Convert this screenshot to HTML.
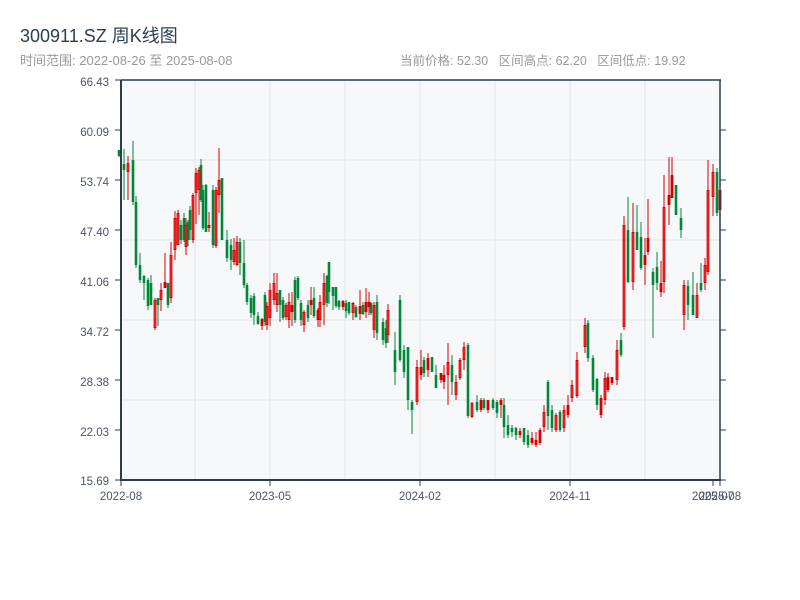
<!DOCTYPE html>
<html><head><meta charset="utf-8"><style>
body{margin:0;background:#fff;width:800px;height:600px;overflow:hidden;font-family:"Liberation Sans","Noto Sans CJK SC",sans-serif;}
.t{position:absolute;left:20px;top:22px;font-size:18px;color:#2c3e50;}
.s{position:absolute;top:50px;font-size:13px;color:#999;white-space:nowrap;}
svg{position:absolute;left:0;top:0}
</style></head><body>
<div class="t">300911.SZ 周K线图</div>
<div class="s" style="left:20px">时间范围: 2022-08-26 至 2025-08-08</div>
<div class="s" style="left:400px;font-size:12.5px">当前价格: 52.30&nbsp;&nbsp; 区间高点: 62.20&nbsp;&nbsp; 区间低点: 19.92</div>
<svg width="800" height="600" font-family="Liberation Sans, sans-serif" font-size="11.5" fill="#4a5568">
<rect x="121" y="80" width="599" height="400" fill="#f7f8fa"/>
<g stroke="#e2e5ea" stroke-width="1">
<line x1="121" y1="160" x2="720" y2="160"/><line x1="121" y1="240" x2="720" y2="240"/><line x1="121" y1="320" x2="720" y2="320"/><line x1="121" y1="400" x2="720" y2="400"/>
<line x1="195" y1="80" x2="195" y2="480"/><line x1="270" y1="80" x2="270" y2="480"/><line x1="345" y1="80" x2="345" y2="480"/><line x1="420" y1="80" x2="420" y2="480"/><line x1="495" y1="80" x2="495" y2="480"/><line x1="570" y1="80" x2="570" y2="480"/><line x1="645" y1="80" x2="645" y2="480"/>
</g>
<g fill="none">
<path stroke="#00883a" stroke-width="1" d="M119 150V157M124 149V200M133 141V205M136 196V268M140 253V283M144 275V300M148 278V310M151 275V305M158 298V326M168 283V308M181 220V244M184 213V242M188 220V246M190 206V240M201 159V202M203 185V230M206 184V232M213 185V248M222 178V240M227 230V262M231 239V270M240 238V275M244 240V288M247 283V305M251 295V318M254 293V325M258 312V325M265 292V326M280 290V322M283 297V320M295 277V323M298 276V300M301 300V326M308 300V322M314 287V318M327 275V307M329 262V304M333 287V310M336 287V308M339 300V310M346 300V318M349 302V315M356 305V318M363 302V315M371 302V315M377 295V340M383 318V345M386 320V348M395 332V385M400 295V362M404 345V378M408 347V410M412 400V434M424 357V377M432 357V372M436 365V388M452 355V395M468 343V418M477 395V412M484 398V410M493 398V410M497 400V418M504 398V438M508 415V438M512 425V437M516 427V440M524 428V445M528 430V448M548 380V430M552 405V432M560 410V432M588 320V362M593 355V392M597 378V410M621 333V357M628 197V283M637 205V250M641 222V270M653 268V338M657 252V290M676 185V215M681 208V238M688 280V320M693 272V310M701 263V292M717 168V216"/>
<path stroke="#00883a" stroke-width="2.6" d="M119 150V156M124 164V170M133 160V202M136 202V265M140 265V280M144 276V283M148 280V306M151 283V305M158 298V305M168 283V305M181 225V240M184 218V240M188 222V240M190 210V230M201 165V200M203 190V228M206 185V232M213 190V245M222 178V240M227 240V258M231 245V260M240 242V263M244 263V285M247 285V302M251 298V313M254 296V315M258 316V324M265 295V322M280 290V305M283 300V318M295 280V320M298 278V298M301 303V320M308 305V318M314 298V316M327 276V303M329 262V292M333 287V296M336 287V306M339 301V307M346 303V311M349 302V313M356 307V317M363 305V314M371 303V313M377 302V333M383 322V340M386 328V343M395 350V372M400 300V360M404 350V372M408 347V400M412 402V410M424 360V373M432 357V372M436 375V388M452 365V382M468 345V416M477 402V410M484 400V408M493 400V408M497 402V413M504 405V427M508 425V435M512 428V432M516 428V435M524 428V442M528 435V445M548 382V416M552 410V428M560 412V430M588 323V358M593 358V390M597 379V405M621 340V355M628 230V282M637 232V250M641 237V268M653 272V285M657 267V283M676 185V215M681 218V230M688 286V305M693 295V315M701 283V290M717 172V213"/>
<path stroke="#d40000" stroke-width="1" d="M128 156V200M155 298V330M161 283V311M165 253V285M171 242V303M175 211V260M178 210V245M186 218V255M193 193V243M196 168V224M199 167V215M209 212V232M216 187V248M219 148V213M234 238V265M237 236V266M262 318V330M267 302V330M270 283V326M274 273V305M277 273V312M286 303V320M289 293V328M292 292V326M304 310V332M311 287V315M318 308V327M320 295V327M324 273V325M343 300V310M353 302V320M360 290V320M366 288V318M369 292V315M374 302V338M388 304V343M417 360V405M421 350V380M428 353V377M441 373V383M444 365V389M448 343V405M456 375V400M460 358V380M464 342V370M472 402V418M481 398V412M488 400V413M501 398V418M520 428V438M532 432V445M536 432V447M540 428V445M544 405V432M556 413V432M564 405V432M568 395V418M572 380V402M577 352V398M585 318V353M601 395V418M605 372V405M608 373V392M612 377V385M617 340V385M624 216V330M633 203V290M645 238V285M648 199V255M661 261V297M664 175V293M669 157V225M672 157V190M684 280V330M697 283V318M705 258V290M708 160V275M713 164V216M720 185V215"/>
<path stroke="#d40000" stroke-width="2.8" d="M128 163V172M155 300V328M161 290V300M165 282V288M171 255V298M175 218V250M178 213V245M186 225V247M193 195V240M196 173V193M199 170V190M209 225V228M216 190V246M219 180V195M234 250V262M237 242V265M262 319V326M267 306V325M270 290V318M274 283V300M277 293V305M286 305V317M289 302V320M292 305V312M304 312V325M311 300V305M318 310V320M320 302V320M324 283V305M343 301V307M353 303V313M360 306V314M366 302V312M369 302V307M374 305V330M388 310V335M417 367V402M421 367V375M428 358V370M441 373V380M444 375V382M448 362V375M456 382V395M460 360V378M464 347V360M472 403V417M481 400V410M488 400V410M501 400V405M520 431V435M532 438V443M536 440V445M540 430V443M544 412V427M556 415V430M564 410V428M568 405V415M572 385V398M577 360V396M585 325V347M601 398V415M605 378V400M608 377V390M612 377V383M617 350V380M624 225V327M633 232V282M645 255V265M648 238V252M661 283V292M664 207V282M669 195V205M672 175V198M684 285V315M697 295V318M705 265V283M708 190V272M713 172V197M720 190V210"/>
<path stroke="#f03030" stroke-width="1.2" d="M128 164V171M155 301V327M161 291V299M171 256V297M175 219V249M178 214V244M186 226V246M193 196V239M196 174V192M199 171V189M216 191V245M219 181V194M234 251V261M237 243V264M267 307V324M270 291V317M274 284V299M277 294V304M286 306V316M289 303V319M304 313V324M320 303V319M324 284V304M353 304V312M374 306V329M388 311V334M417 368V401M448 363V374M456 383V394M460 361V377M464 348V359M472 404V416M544 413V426M556 416V429M564 411V427M572 386V397M577 361V395M585 326V346M605 379V399M617 351V379M624 226V326M633 233V281M664 208V281M684 286V314M697 296V317M705 266V282M708 191V271M713 173V196"/>
</g>
<g stroke="#2d3b4e" stroke-width="2" fill="none">
<line x1="121" y1="80" x2="721" y2="80" stroke-width="1.5"/>
<line x1="121" y1="80" x2="121" y2="481"/>
<line x1="120" y1="480" x2="721" y2="480"/>
<line x1="720" y1="80" x2="720" y2="481" stroke-width="1.5"/>
</g>
<g stroke="#2d3b4e" stroke-width="1">
<line x1="115" y1="80" x2="121" y2="80"/><line x1="115" y1="130" x2="121" y2="130"/><line x1="115" y1="180" x2="121" y2="180"/><line x1="115" y1="230" x2="121" y2="230"/><line x1="115" y1="280" x2="121" y2="280"/><line x1="115" y1="330" x2="121" y2="330"/><line x1="115" y1="380" x2="121" y2="380"/><line x1="115" y1="430" x2="121" y2="430"/><line x1="115" y1="480" x2="121" y2="480"/>
<line x1="720" y1="130" x2="726" y2="130"/><line x1="720" y1="180" x2="726" y2="180"/><line x1="720" y1="230" x2="726" y2="230"/><line x1="720" y1="280" x2="726" y2="280"/><line x1="720" y1="330" x2="726" y2="330"/><line x1="720" y1="380" x2="726" y2="380"/><line x1="720" y1="430" x2="726" y2="430"/><line x1="720" y1="480" x2="726" y2="480"/>
<line x1="121" y1="480" x2="121" y2="486"/><line x1="270" y1="480" x2="270" y2="486"/><line x1="420" y1="480" x2="420" y2="486"/><line x1="570" y1="480" x2="570" y2="486"/><line x1="713" y1="480" x2="713" y2="486"/><line x1="720" y1="480" x2="720" y2="486"/>
</g>
<g text-anchor="end">
<text x="109" y="86">66.43</text><text x="109" y="136">60.09</text><text x="109" y="186">53.74</text><text x="109" y="236">47.40</text><text x="109" y="286">41.06</text><text x="109" y="336">34.72</text><text x="109" y="386">28.38</text><text x="109" y="436">22.03</text><text x="109" y="485">15.69</text>
</g>
<g text-anchor="middle">
<text x="121" y="500">2022-08</text><text x="270" y="500">2023-05</text><text x="420" y="500">2024-02</text><text x="570" y="500">2024-11</text><text x="713" y="500">2025-07</text><text x="720" y="500">2025-08</text>
</g>
</svg>
</body></html>
